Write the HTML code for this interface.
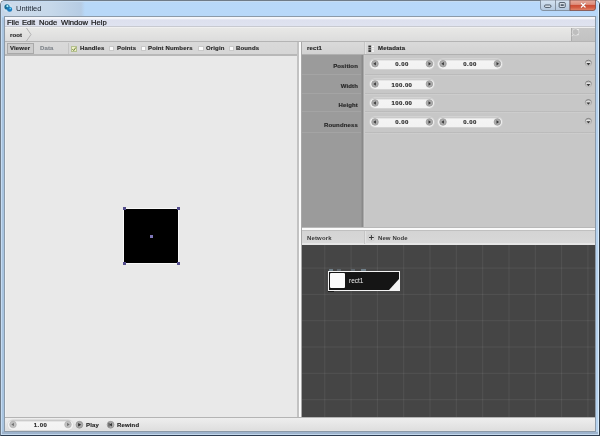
<!DOCTYPE html>
<html><head><meta charset="utf-8">
<style>
*{margin:0;padding:0;box-sizing:border-box}
html,body{width:600px;height:436px;overflow:hidden;background:#fff;font-family:"Liberation Sans",sans-serif}
.a{position:absolute}
.lbl,.menu,#title,.t{will-change:transform}
#frame{left:0;top:0;width:600px;height:436px;background:linear-gradient(#b8d8f8,#b4d6fa 16px,#a8c4e0 17px,#a8c4e0 430px,#9cb2cc 431px,#a0b6ce 434px,#c4d8ec 434px);border:1px solid #6f7b88;border-right-color:#303a44;border-bottom-color:#2c3c50;border-radius:5px 5px 0 0}
#frin{left:1px;top:1px;width:598px;height:434px;border:1px solid #c6dcf2;border-right-color:#d8ecfc;border-bottom-color:#c4d8ec;border-radius:4px 4px 0 0}
#client{left:4px;top:15.5px;width:592px;height:416px;background:#8c9aa8}
#title{left:16px;top:3.5px;font-size:7.5px;color:#1b2430;line-height:9px}
#menubar{left:5px;top:16.5px;width:590px;height:10px;background:linear-gradient(#f8f8fc 0,#f4f5fa 1.5px,#dde0ee 3px,#e0e4f0 100%)}
.menu{top:18.6px;font-size:7.6px;color:#121212;line-height:8px;-webkit-text-stroke:0.2px #121212}
#crumb{left:5px;top:26px;width:590px;height:16px;background:linear-gradient(#c8cad0 0,#c8cad0 0.7px,#f0f0f0 1.2px,#f0f0f0 2px,#e8e8e6 2px,#dcdcdc 15px,#b4b4b4 15px)}
#search{left:571px;top:28px;width:24px;height:13px;background:linear-gradient(#c8c8c8,#c2c2c2);border-left:1px solid #acacac}
#toolbar{left:5px;top:42px;width:292px;height:13.5px;background:linear-gradient(#d9d9d9,#d6d6d6 12px,#b8b8b8 12px)}
#viewer{left:5px;top:55.5px;width:292px;height:361px;background:linear-gradient(90deg,#f0f2f4 0,#f0f2f4 1px,#e9e9e9 1px)}
#split{left:297px;top:42px;width:5px;height:374.5px;background:linear-gradient(90deg,#c2c2c2 0,#c2c2c2 1.5px,#fbfbfb 1.5px,#fbfbfb 4px,#a8a8a8 4px)}
#phead{left:302px;top:42px;width:293px;height:13px;background:linear-gradient(#dadada,#d2d2d2);border-bottom:1px solid #b0b0b0}
#labels{left:302px;top:55px;width:61px;height:172px;background:#9b9b9b}
#props{left:363px;top:55px;width:232px;height:172px;background:#c7c7c7}
#pgap{left:302px;top:227px;width:293px;height:4px;background:linear-gradient(#b8b8b8 0,#b8b8b8 0.8px,#fafafa 0.8px,#fafafa 3px,#c0c0c0 3px)}
#nhead{left:302px;top:231px;width:293px;height:14px;background:linear-gradient(#d4d4d4,#d8d8d8 12.5px,#e6e6e6 12.5px)}
#net{left:302px;top:245px;width:293px;height:171.5px;background-color:#454545;
 background-image:linear-gradient(90deg,rgba(255,255,255,0.065) 1px,transparent 1px),linear-gradient(rgba(255,255,255,0.065) 1px,transparent 1px);
 background-size:26.32px 26.32px;background-position:22.3px 22.6px}
#bottom{left:5px;top:416.5px;width:590px;height:14.5px;background:linear-gradient(#b4b4b4 0,#b4b4b4 0.6px,#eeeeee 1px,#dedede 13.5px,#e2e2e2 13.5px)}
.lbl{font-size:6px;font-weight:bold;color:#262626;line-height:7px;white-space:nowrap;letter-spacing:0.15px;-webkit-text-stroke:0.15px currentColor}
.num{letter-spacing:0.4px}
.sep{height:2px;background:linear-gradient(rgba(0,0,0,0.06) 0,rgba(0,0,0,0.06) 1px,rgba(255,255,255,0.1) 1px)}
.cb{width:5.5px;height:5.5px;background:#fcfcfc;border:0.8px solid #c8c8c8}
.fld{height:10px;border-radius:5px;background:linear-gradient(#b8b8b8 0,#dedede 1px,#f4f4f4 2.5px,#f2f2f2 100%);box-shadow:0 0 0.5px 0.7px #d8d8d8}
</style></head><body>
<div id="frame" class="a"></div><div class="a" style="left:1px;top:1px;width:598px;height:15px;border-radius:4px 4px 0 0;background:linear-gradient(90deg,#c4d4e6 0,#ccdaea 12px,#c6d8ea 50px,#b6cce4 80px,#b8d8f8 84px,#b8d8fa 100%)"></div><div id="frin" class="a"></div><div class="a" style="left:596px;top:16px;width:2px;height:416px;background:#b6d2ee"></div><div id="client" class="a"></div>
<svg class="a" style="left:0;top:0" width="16" height="16">
 <circle cx="7.6" cy="7.5" r="4.6" fill="#d8ecf8" opacity="0.5"/>
 <circle cx="7" cy="6.9" r="2.6" fill="#1b6c94"/><circle cx="9.6" cy="9.3" r="2.5" fill="#1a7cc0"/>
 <circle cx="7.4" cy="6.2" r="1.1" fill="#a8f0ff"/><circle cx="10.3" cy="8.4" r="0.9" fill="#6cd4f8"/>
</svg>
<div id="title" class="a">Untitled</div>
<!-- window buttons -->
<svg class="a" style="left:540px;top:0" width="57" height="12">
 <defs>
  <linearGradient id="gb" x1="0" y1="0" x2="0" y2="1"><stop offset="0" stop-color="#d6e4f2"/><stop offset="1" stop-color="#b4c8de"/></linearGradient>
  <linearGradient id="gr" x1="0" y1="0" x2="0" y2="1"><stop offset="0" stop-color="#e6ac9e"/><stop offset="0.42" stop-color="#de8e7c"/><stop offset="0.52" stop-color="#cc4e36"/><stop offset="0.7" stop-color="#d25a40"/><stop offset="1" stop-color="#e08a70"/></linearGradient>
 </defs>
 <path d="M0.5 0 V8 Q0.5 10.5 3 10.5 H30 V0 Z" fill="url(#gb)" stroke="#76828f" stroke-width="0.8"/>
 <line x1="15.5" y1="0" x2="15.5" y2="10.5" stroke="#76828f" stroke-width="0.8"/>
 <path d="M30 0 V10.5 H53 Q55.5 10.5 55.5 8 V0 Z" fill="url(#gr)" stroke="#7a4a44" stroke-width="0.8"/>
 <rect x="4.5" y="5" width="6.5" height="2.4" rx="1.2" fill="#e6eef6" stroke="#3a4654" stroke-width="0.9"/>
 <rect x="19.2" y="2.6" width="6" height="4.8" rx="0.8" fill="#e6eef6" stroke="#3a4654" stroke-width="0.9"/>
 <rect x="20.6" y="4.2" width="3.2" height="1.8" fill="#556270"/>
 <path d="M41 3 L45.5 7.5 M45.5 3 L41 7.5" stroke="#6a2a20" stroke-width="2" opacity="0.35"/><path d="M41 3 L45.5 7.5 M45.5 3 L41 7.5" stroke="#fff" stroke-width="1.3"/>
</svg>

<div id="menubar" class="a"></div>
<div class="a menu" style="left:7px">File</div>
<div class="a menu" style="left:21.6px">Edit</div>
<div class="a menu" style="left:38.6px">Node</div>
<div class="a menu" style="left:61px">Window</div>
<div class="a menu" style="left:91px">Help</div>

<div id="crumb" class="a"></div>
<div class="a lbl" style="left:10px;top:31.6px">root</div>
<svg class="a" style="left:26px;top:28px" width="6" height="13"><path d="M0.5 0 L5 6.5 L0.5 13" fill="none" stroke="#a8a8a8" stroke-width="0.8"/></svg>
<div id="search" class="a"></div>
<svg class="a" style="left:569px;top:26px" width="14" height="14"><circle cx="6.6" cy="6.1" r="3.4" fill="#bebebe" stroke="#dadada" stroke-width="0.9"/><circle cx="9" cy="3.6" r="0.7" fill="#fff"/><circle cx="9" cy="8.6" r="0.7" fill="#f4f4f4"/><path d="M4.2 8.6 L2.6 10.2" stroke="#e8e8e8" stroke-width="1"/></svg>

<div id="toolbar" class="a"></div>
<div class="a" style="left:7px;top:43px;width:27px;height:11px;background:#cdcdcd;border:1px solid #a9a9a9"></div>
<div class="a lbl" style="left:10px;top:45px">Viewer</div>
<div class="a lbl" style="left:40px;top:45px;color:#80868c">Data</div>
<div class="a" style="left:67.5px;top:43px;width:1px;height:11px;background:#c4c4c4"></div>
<div class="a cb" style="left:71px;top:45.5px;width:6px;height:6px;background:#eef0c4;border-color:#b4c090"></div>
<svg class="a" style="left:71px;top:45.5px" width="6" height="6"><path d="M1.4 3.1 L2.7 4.5 L4.8 1.5" fill="none" stroke="#5a7030" stroke-width="0.9"/></svg>
<div class="a lbl" style="left:80px;top:45px">Handles</div>
<div class="a cb" style="left:108.5px;top:45.6px"></div>
<div class="a lbl" style="left:116.5px;top:45px">Points</div>
<div class="a cb" style="left:140.5px;top:45.6px"></div>
<div class="a lbl" style="left:148px;top:45px">Point Numbers</div>
<div class="a cb" style="left:198px;top:45.6px"></div>
<div class="a lbl" style="left:205.7px;top:45px">Origin</div>
<div class="a cb" style="left:228.7px;top:45.6px"></div>
<div class="a lbl" style="left:236.3px;top:45px">Bounds</div>

<div id="viewer" class="a"></div>
<!-- rect in viewer -->
<div class="a" style="left:123px;top:208px;width:56px;height:56px;background:#f8f8f8"></div>
<div class="a" style="left:124px;top:209px;width:54px;height:54px;background:#000"></div>
<div class="a" style="left:122.5px;top:207px;width:3px;height:3px;background:#544e8c"></div>
<div class="a" style="left:176.5px;top:207px;width:3px;height:3px;background:#544e8c"></div>
<div class="a" style="left:122.5px;top:261.5px;width:3px;height:3px;background:#544e8c"></div>
<div class="a" style="left:176.5px;top:261.5px;width:3px;height:3px;background:#544e8c"></div>
<div class="a" style="left:149.5px;top:234.5px;width:3px;height:3px;background:#7e76b8"></div>

<div id="split" class="a"></div>
<div id="phead" class="a"></div>
<div class="a lbl" style="left:307px;top:45px">rect1</div>
<div class="a" style="left:363.5px;top:42px;width:1px;height:12px;background:#c6c6c6"></div><div class="a" style="left:364.5px;top:42px;width:1px;height:12px;background:#e2e2e2"></div>
<svg class="a" style="left:368px;top:44.5px" width="7" height="8"><rect x="0.3" y="0.4" width="6" height="6.6" fill="#c8c8c8"/><rect x="0.4" y="0.6" width="2.8" height="1.7" fill="#2a2a2a"/><rect x="0.4" y="3.1" width="2.8" height="1.4" fill="#3a3a3a"/><rect x="0.4" y="5.2" width="2.8" height="1.7" fill="#2a2a2a"/><rect x="3.5" y="0.6" width="2.6" height="1.7" fill="#f6f6f6"/><rect x="3.5" y="3.1" width="2.6" height="1.4" fill="#f6f6f6"/><rect x="3.5" y="5.2" width="2.6" height="1.7" fill="#f6f6f6"/></svg>
<div class="a lbl" style="left:378px;top:45px">Metadata</div>

<div id="labels" class="a"></div>
<div id="props" class="a"></div>
<div class="a sep" style="left:363px;top:74px;width:232px"></div><div class="a" style="left:302px;top:74px;width:61px;height:1px;background:rgba(255,255,255,0.09)"></div>
<div class="a sep" style="left:363px;top:93px;width:232px"></div><div class="a" style="left:302px;top:93px;width:61px;height:1px;background:rgba(255,255,255,0.09)"></div>
<div class="a sep" style="left:363px;top:111px;width:232px"></div><div class="a" style="left:302px;top:111px;width:61px;height:1px;background:rgba(255,255,255,0.09)"></div>
<div class="a sep" style="left:363px;top:132px;width:232px"></div><div class="a" style="left:302px;top:132px;width:61px;height:1px;background:rgba(255,255,255,0.09)"></div>

<div class="a" style="left:361px;top:55px;width:4px;height:172px;background:linear-gradient(90deg,#969696 0,#8e8e8e 1px,#848484 2px,#d0d0d0 3px,#c8c8c8 4px)"></div>

<div class="a lbl" style="left:300px;width:58px;text-align:right;top:63.2px">Position</div>
<div class="a lbl" style="left:300px;width:58px;text-align:right;top:83.2px">Width</div>
<div class="a lbl" style="left:300px;width:58px;text-align:right;top:101.8px">Height</div>
<div class="a lbl" style="left:300px;width:58px;text-align:right;top:121.6px">Roundness</div>

<!-- fields -->
<div class="a fld" style="left:370px;top:58.7px;width:64px"></div>
<div class="a fld" style="left:438px;top:58.7px;width:64px"></div>
<div class="a fld" style="left:370px;top:79px;width:64px"></div>
<div class="a fld" style="left:370px;top:98px;width:64px"></div>
<div class="a fld" style="left:370px;top:117px;width:64px"></div>
<div class="a fld" style="left:438px;top:117px;width:64px"></div>

<svg class="a" style="left:0;top:0" width="600" height="436">
 <defs>
  <g id="al"><circle cx="0" cy="0" r="3.3" fill="#acacac" stroke="#969696" stroke-width="0.7"/><path d="M-1.6 0 L0.9 -1.7 L0.9 1.7Z" fill="#363636"/></g>
  <g id="ar"><circle cx="0" cy="0" r="3.3" fill="#acacac" stroke="#969696" stroke-width="0.7"/><path d="M1.6 0 L-0.9 -1.7 L-0.9 1.7Z" fill="#363636"/></g>
  <linearGradient id="ddg" x1="0" y1="0" x2="0" y2="1"><stop offset="0" stop-color="#707070"/><stop offset="0.6" stop-color="#a8a8a8"/><stop offset="1" stop-color="#c0c0c0"/></linearGradient>
  <g id="dd"><circle cx="0" cy="0" r="3.1" fill="#c4c4c4" stroke="url(#ddg)" stroke-width="0.9"/><line x1="-2.2" y1="-0.9" x2="2.2" y2="-0.9" stroke="#f0f0f0" stroke-width="0.8"/><path d="M-1.9 -0.2 L1.9 -0.2 L0 2.1Z" fill="#383838"/></g>
 </defs>
 <use href="#al" x="375" y="63.7"/><use href="#ar" x="429.4" y="63.7"/>
 <use href="#al" x="443" y="63.7"/><use href="#ar" x="497.4" y="63.7"/>
 <use href="#al" x="375" y="84"/><use href="#ar" x="429.4" y="84"/>
 <use href="#al" x="375" y="103"/><use href="#ar" x="429.4" y="103"/>
 <use href="#al" x="375" y="122"/><use href="#ar" x="429.4" y="122"/>
 <use href="#al" x="443" y="122"/><use href="#ar" x="497.4" y="122"/>
 <use href="#dd" x="588.4" y="63.3"/><use href="#dd" x="588.4" y="84.2"/><use href="#dd" x="588.4" y="102.7"/><use href="#dd" x="588.4" y="121.5"/>
</svg>

<div class="a lbl num" style="left:370px;width:64px;text-align:center;top:60.5px">0.00</div>
<div class="a lbl num" style="left:438px;width:64px;text-align:center;top:60.5px">0.00</div>
<div class="a lbl num" style="left:370px;width:64px;text-align:center;top:81.5px">100.00</div>
<div class="a lbl num" style="left:370px;width:64px;text-align:center;top:100px">100.00</div>
<div class="a lbl num" style="left:370px;width:64px;text-align:center;top:118.5px">0.00</div>
<div class="a lbl num" style="left:438px;width:64px;text-align:center;top:118.5px">0.00</div>

<div id="pgap" class="a"></div>
<div id="nhead" class="a"></div>
<div class="a lbl" style="left:307px;top:235px;color:#383838;-webkit-text-stroke:0">Network</div>
<div class="a" style="left:363.5px;top:231px;width:1px;height:13px;background:#c6c6c6"></div><div class="a" style="left:364.5px;top:231px;width:1px;height:13px;background:#e2e2e2"></div>
<svg class="a" style="left:366px;top:232px" width="11" height="11"><circle cx="5.4" cy="5.5" r="3.6" fill="none" stroke="#c4c4c4" stroke-width="0.6"/><path d="M3 5.5 H7.8 M5.4 3.1 V7.9" stroke="#363636" stroke-width="1"/></svg>
<div class="a lbl" style="left:377.6px;top:235px;color:#383838;letter-spacing:0.1px;-webkit-text-stroke:0">New Node</div>

<div id="net" class="a"></div>
<!-- node -->
<div class="a" style="left:328px;top:271px;width:72px;height:20px;background:#f4f4f4"></div>
<div class="a" style="left:329px;top:272px;width:70px;height:18px;background:#151515"></div>
<div class="a" style="left:330px;top:273px;width:15px;height:15px;background:#fafafa;border-radius:1px"></div>
<svg class="a" style="left:389px;top:279px" width="10" height="11"><path d="M10 0 L10 11 L0 11 Z" fill="#f4f4f4"/></svg>
<div class="a t" style="left:348.8px;top:277px;font-size:6.5px;line-height:8px;color:#ececec">rect1</div>
<div class="a" style="left:329px;top:269px;width:4px;height:1.5px;background:#6e7e88"></div><div class="a" style="left:337px;top:269px;width:4px;height:1.5px;background:#5e666c"></div><div class="a" style="left:351px;top:269px;width:4px;height:1.5px;background:#5e666c"></div><div class="a" style="left:361px;top:269px;width:5px;height:1.5px;background:#6e7e88"></div>
<div class="a" style="left:328px;top:291px;width:6px;height:1px;background:#1a1a1a"></div>

<div id="bottom" class="a"></div>
<div class="a fld" style="left:8px;top:419.5px;width:65px"></div>
<svg class="a" style="left:0;top:0" width="300" height="436">
 <g opacity="0.7"><use href="#al" x="13" y="424.5"/><use href="#ar" x="68" y="424.5"/></g>
 <circle cx="79.4" cy="424.75" r="3.4" fill="#a8a8a8" stroke="#8e8e8e" stroke-width="0.7"/><path d="M78.2 422.9 L81.2 424.75 L78.2 426.6Z" fill="#2a2a2a"/>
 <circle cx="110.6" cy="424.75" r="3.4" fill="#a8a8a8" stroke="#8e8e8e" stroke-width="0.7"/><path d="M111.9 422.9 L109.4 424.75 L111.9 426.6Z" fill="#2a2a2a"/><rect x="108.6" y="422.9" width="0.8" height="3.7" fill="#2a2a2a"/>
</svg>
<div class="a lbl num" style="left:8px;width:65px;text-align:center;top:421.7px">1.00</div>
<div class="a lbl" style="left:85.6px;top:422px">Play</div>
<div class="a lbl" style="left:116.9px;top:422px">Rewind</div>
</body></html>
